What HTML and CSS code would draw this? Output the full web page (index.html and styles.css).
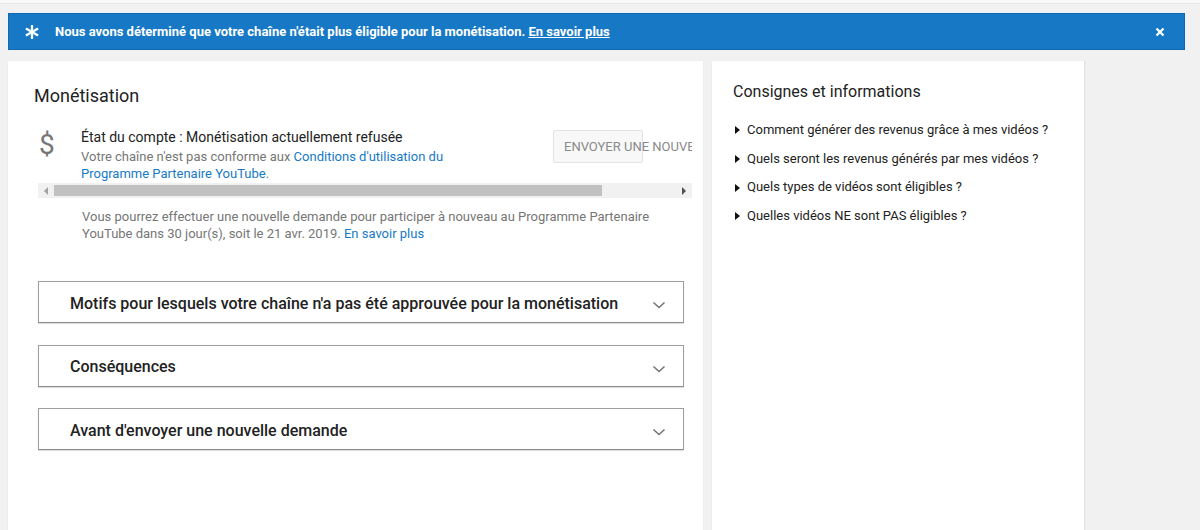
FILE: index.html
```html
<!DOCTYPE html>
<html lang="fr">
<head>
<meta charset="utf-8">
<title>Monétisation</title>
<link rel="stylesheet" href="styles.css">
</head>
<body>
<div class="topline"></div>
<div class="page">
  <div class="banner">
    <svg class="star" width="16" height="16" viewBox="0 0 16 16">
      <g stroke="#fff" stroke-width="2.3" stroke-linecap="butt">
        <line x1="8" y1="1" x2="8" y2="15"/>
        <line x1="1.9" y1="4.5" x2="14.1" y2="11.5"/>
        <line x1="1.9" y1="11.5" x2="14.1" y2="4.5"/>
      </g>
    </svg>
    <span class="banner-text">Nous avons déterminé que votre chaîne n'était plus éligible pour la monétisation. <a href="#">En savoir plus</a></span>
    <svg class="close" width="10" height="10" viewBox="0 0 10 10">
      <g stroke="#fff" stroke-width="2.2"><line x1="1.5" y1="1.5" x2="8.5" y2="8.5"/><line x1="8.5" y1="1.5" x2="1.5" y2="8.5"/></g>
    </svg>
  </div>

  <div class="columns">
    <section class="card main">
      <h1 class="title">Monétisation</h1>

      <div class="status-scroll">
        <div class="status-row">
          <div class="dollar">$</div>
          <div class="status-text">
            <div class="status-title">État du compte : Monétisation actuellement refusée</div>
            <div class="status-sub">Votre chaîne n'est pas conforme aux <a href="#">Conditions d'utilisation du Programme Partenaire YouTube</a>.</div>
          </div>
          <div class="btn">ENVOYER UNE NOUVELLE DEMANDE</div>
        </div>
      </div>
      <div class="scrollbar">
        <div class="sb-arrow left"><span class="tri-l"></span></div>
        <div class="sb-track"><div class="sb-thumb"></div></div>
        <div class="sb-arrow right"><span class="tri-r"></span></div>
      </div>

      <p class="note">Vous pourrez effectuer une nouvelle demande pour participer à nouveau au Programme Partenaire YouTube dans 30 jour(s), soit le 21 avr. 2019. <a href="#">En savoir plus</a></p>

      <div class="accordions">
        <div class="acc">
          <span>Motifs pour lesquels votre chaîne n'a pas été approuvée pour la monétisation</span>
          <svg class="chev" width="14" height="8" viewBox="0 0 14 8"><polyline points="1.5,1.5 7,6.5 12.5,1.5" fill="none" stroke="#757575" stroke-width="1.6"/></svg>
        </div>
        <div class="acc">
          <span>Conséquences</span>
          <svg class="chev" width="14" height="8" viewBox="0 0 14 8"><polyline points="1.5,1.5 7,6.5 12.5,1.5" fill="none" stroke="#757575" stroke-width="1.6"/></svg>
        </div>
        <div class="acc">
          <span>Avant d'envoyer une nouvelle demande</span>
          <svg class="chev" width="14" height="8" viewBox="0 0 14 8"><polyline points="1.5,1.5 7,6.5 12.5,1.5" fill="none" stroke="#757575" stroke-width="1.6"/></svg>
        </div>
      </div>
    </section>

    <aside class="card side">
      <h2 class="side-title">Consignes et informations</h2>
      <ul class="faq">
        <li><span class="tri"></span>Comment générer des revenus grâce à mes vidéos ?</li>
        <li><span class="tri"></span>Quels seront les revenus générés par mes vidéos ?</li>
        <li><span class="tri"></span>Quels types de vidéos sont éligibles ?</li>
        <li><span class="tri"></span>Quelles vidéos NE sont PAS éligibles ?</li>
      </ul>
    </aside>
  </div>
</div>
</body>
</html>
```

FILE: styles.css
```css
* { box-sizing: border-box; }
html, body { margin: 0; padding: 0; }
body {
  background: #f1f1f1;
  font-family: Roboto, "Liberation Sans", Arial, sans-serif;
  color: #222;
  height: 530px;
  overflow: hidden;
}
a { color: #167ac6; text-decoration: none; }

.topline {
  height: 4px;
  background: #f8f8f8;
  border-bottom: 1px solid #e6e6e6;
}
.page { padding: 9px 0 0 8px; }

.banner {
  width: 1177px;
  height: 37px;
  background: #1779c6;
  border: 1px solid #0e68b3;
  display: flex;
  align-items: center;
  padding: 0 0 0 15px;
  color: #fff;
}
.star { flex: none; margin-right: 15px; }
.banner-text {
  font-size: 13px;
  font-weight: 700;
  flex: 1;
  white-space: nowrap;
}
.banner-text a { color: #fff; text-decoration: underline; }
.close { flex: none; margin-right: 19px; }

.columns {
  display: flex;
  gap: 9px;
  margin-top: 11px;
  align-items: flex-start;
}
.card {
  background: #fff;
  height: 480px;
  box-shadow: 0 0 1px rgba(0,0,0,0.08);
}
.main { width: 695px; padding: 23px 0 0 26px; }
.side { width: 373px; padding: 21px 0 0 21px; border-right: 1px solid #e2e2e2; }

.title {
  margin: 0;
  font-size: 18px;
  line-height: 24px;
  font-weight: 400;
  color: #222;
}

.status-scroll {
  margin: 18px 0 0 4px;
  width: 654px;
  overflow: hidden;
}
.status-row {
  display: flex;
  align-items: flex-start;
  width: 742px;
  padding: 0 0 1px 0;
}
.dollar {
  width: 43px;
  flex: none;
  font-size: 28px;
  line-height: 30px;
  color: #767676;
  padding: 4px 0 0 1px;
  font-weight: 400;
}
.status-text { width: 372px; flex: none; font-size: 13px; line-height: 17px; }
.status-title { color: #222; font-size: 14px; line-height: 22px; }
.status-sub { color: #767676; }
.btn {
  flex: none;
  margin-left: 100px;
  margin-top: 4px;
  width: 90px;
  height: 33px;
  border: 1px solid #e3e3e3;
  border-radius: 2px;
  background: #f8f8f8;
  color: #8a8a8a;
  font-size: 13px;
  line-height: 31px;
  padding-left: 10px;
  white-space: nowrap;
  overflow: visible;
}

.scrollbar {
  margin-left: 4px;
  width: 654px;
  height: 15px;
  display: flex;
  background: #f1f1f1;
}
.sb-arrow { width: 16px; flex: none; display: flex; align-items: center; justify-content: center; }
.sb-track { flex: 1; padding: 2px 0; }
.sb-thumb { width: 548px; height: 11px; background: #c1c1c1; }
.tri-l { width: 0; height: 0; border-right: 4px solid #a3a3a3; border-top: 4px solid transparent; border-bottom: 4px solid transparent; }
.tri-r { width: 0; height: 0; border-left: 4px solid #505050; border-top: 4px solid transparent; border-bottom: 4px solid transparent; }

.note {
  margin: 10px 0 0 48px;
  width: 600px;
  font-size: 13px;
  line-height: 17px;
  color: #767676;
}

.accordions {
  margin: 39px 0 0 4px;
  width: 646px;
  display: flex;
  flex-direction: column;
  gap: 21.5px;
}
.acc {
  height: 42px;
  border: 1px solid #9e9e9e;
  border-bottom-color: #8a8a8a;
  box-shadow: 0 1px 1px rgba(0,0,0,0.12);
  display: flex;
  align-items: center;
  justify-content: space-between;
  padding: 0 17px 0 31px;
  font-size: 16px;
  font-weight: 500;
  color: #222;
}
.acc span { padding-top: 2px; }
.chev { flex: none; margin-top: 6px; }

.side-title {
  margin: 0;
  font-size: 16px;
  line-height: 20px;
  font-weight: 400;
  color: #222;
}
.faq {
  list-style: none;
  margin: 14px 0 0 0;
  padding: 0;
}
.faq li {
  font-size: 13px;
  line-height: 28.7px;
  color: #222;
  display: flex;
  align-items: center;
}
.tri {
  width: 0; height: 0;
  border-left: 5px solid #111;
  border-top: 4px solid transparent;
  border-bottom: 4px solid transparent;
  margin: 0 7px 0 2px;
}
```
